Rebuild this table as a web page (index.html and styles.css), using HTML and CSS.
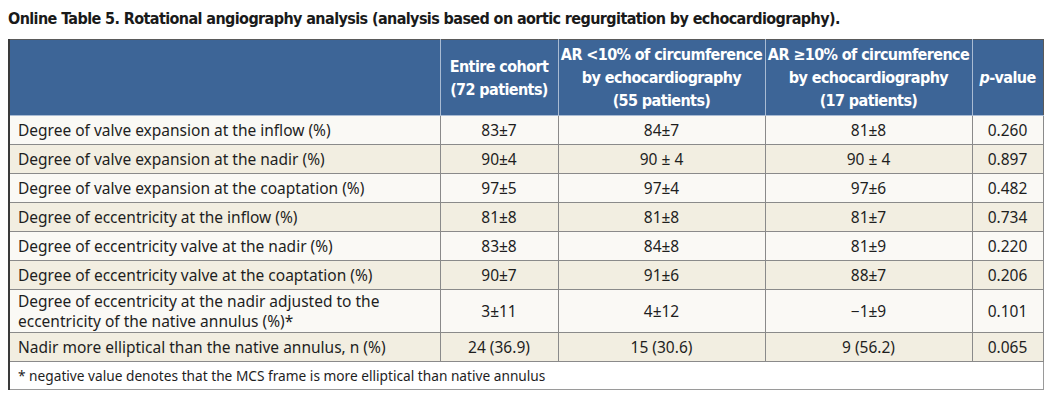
FILE: index.html
```html
<!DOCTYPE html>
<html>
<head>
<meta charset="utf-8">
<link rel="stylesheet" href="styles.css">
</head>
<body>
<h1 class="title">Online Table 5. Rotational angiography analysis (analysis based on aortic regurgitation by echocardiography).</h1>
<table class="data">
  <colgroup>
    <col class="c-label">
    <col class="c-all">
    <col class="c-grp">
    <col class="c-grp">
    <col class="c-p">
  </colgroup>
  <thead>
    <tr>
      <th></th>
      <th>Entire cohort<br>(72 patients)</th>
      <th>AR &lt;10% of circumference<br>by echocardiography<br>(55 patients)</th>
      <th>AR ≥10% of circumference<br>by echocardiography<br>(17 patients)</th>
      <th><i>p</i>-value</th>
    </tr>
  </thead>
  <tbody>
    <tr class="odd"><td>Degree of valve expansion at the inflow (%)</td><td>83±7</td><td>84±7</td><td>81±8</td><td>0.260</td></tr>
    <tr class="even"><td>Degree of valve expansion at the nadir (%)</td><td>90±4</td><td>90 ± 4</td><td>90 ± 4</td><td>0.897</td></tr>
    <tr class="odd"><td>Degree of valve expansion at the coaptation (%)</td><td>97±5</td><td>97±4</td><td>97±6</td><td>0.482</td></tr>
    <tr class="even"><td>Degree of eccentricity at the inflow (%)</td><td>81±8</td><td>81±8</td><td>81±7</td><td>0.734</td></tr>
    <tr class="odd"><td>Degree of eccentricity valve at the nadir (%)</td><td>83±8</td><td>84±8</td><td>81±9</td><td>0.220</td></tr>
    <tr class="even"><td>Degree of eccentricity valve at the coaptation (%)</td><td>90±7</td><td>91±6</td><td>88±7</td><td>0.206</td></tr>
    <tr class="odd tall"><td>Degree of eccentricity at the nadir adjusted to the<br>eccentricity of the native annulus (%)*</td><td>3±11</td><td>4±12</td><td>−1±9</td><td>0.101</td></tr>
    <tr class="even"><td>Nadir more elliptical than the native annulus, n (%)</td><td>24 (36.9)</td><td>15 (30.6)</td><td>9 (56.2)</td><td>0.065</td></tr>
  </tbody>
  <tfoot>
    <tr><td colspan="5">* negative value denotes that the MCS frame is more elliptical than native annulus</td></tr>
  </tfoot>
</table>
</body>
</html>
```
FILE: styles.css
```css
html, body {
  margin: 0;
  padding: 0;
  background: #ffffff;
}
body {
  padding: 8px 0 0 8px;
}
.title {
  margin: 0 0 9px 0;
  font-family: "DejaVu Sans", sans-serif;
  font-stretch: condensed;
  font-weight: bold;
  font-size: 16px;
  line-height: 22px;
  color: #1a1a1a;
  letter-spacing: -0.6px;
  white-space: nowrap;
}
.data {
  border-collapse: collapse;
  table-layout: fixed;
  width: 1034px;
  font-family: "Noto Sans", "Open Sans", sans-serif;
  font-size: 15.5px;
  color: #1e1e1e;
}
.c-label { width: 431px; }
.c-all { width: 118px; }
.c-grp { width: 207px; }
.c-p { width: 71px; }
.data th {
  background: #3d6597;
  color: #ffffff;
  font-family: "DejaVu Sans", sans-serif;
  font-stretch: condensed;
  font-weight: bold;
  font-size: 16px;
  letter-spacing: -0.6px;
  line-height: 23px;
  height: 75px;
  padding: 0;
  text-align: center;
  vertical-align: middle;
  white-space: nowrap;
  border: 1px solid #a9bbd3;
  border-top-color: #5a5a5a;
}
.data th:first-child { border-left: 2px solid #3a3a3a; }
.data th:last-child { border-right-color: #5a5a5a; }
.data th i { font-style: italic; }
.data td {
  height: 28px;
  padding: 0 8px;
  text-align: center;
  vertical-align: middle;
  border: 1px solid #8a8a8a;
  line-height: 20px;
}
.data td:first-child {
  text-align: left;
  border-left: 2px solid #3a3a3a;
}
.data tbody td:nth-child(2) { border-left-color: #4a4a4a; }
.data tbody td:nth-child(3) { border-left-color: #2a2a2a; }
.odd td { background: #faf9f5; }
.even td { background: #f2eee1; }
.tall td { height: 42px; }
.data tfoot td {
  background: #ffffff;
  text-align: left;
  height: 27px;
  font-size: 13.7px;
  border-color: #9a9a9a;
}
```
